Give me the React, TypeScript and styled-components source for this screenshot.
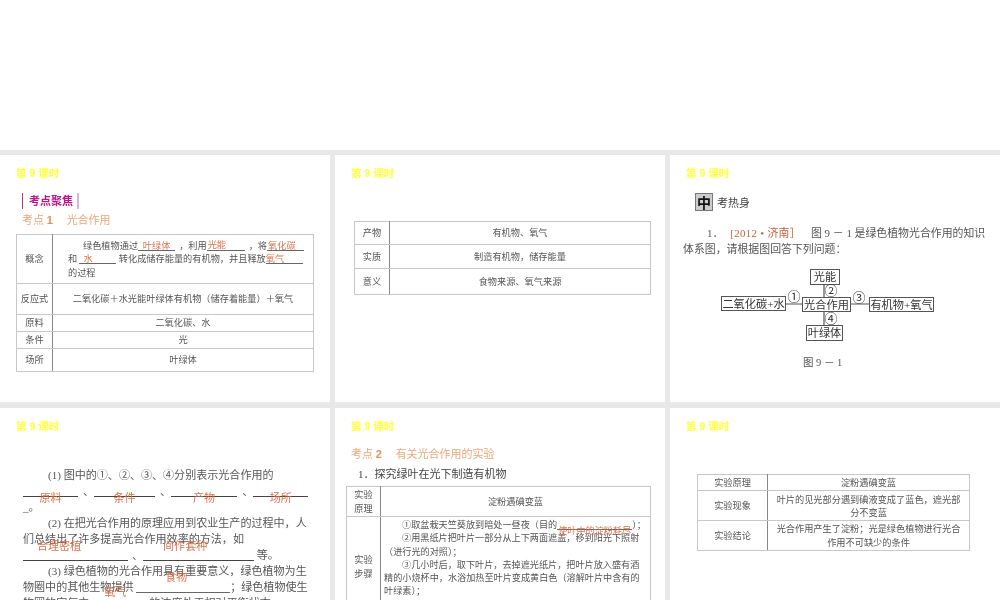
import React from 'react';
import styled, { createGlobalStyle } from 'styled-components';

const GlobalStyle = createGlobalStyle`
  html, body {
    margin: 0;
    height: 100%;
    overflow: hidden;
    background: #fff;
  }
  body {
    font-family: "Liberation Serif", "Noto Sans CJK SC", serif;
    color: #444;
  }
`;

const Page = styled.div`
  width: 1000px;
  height: 600px;
  overflow: hidden;
  padding-top: 150px;
  box-sizing: border-box;
`;

const Deck = styled.main`
  display: grid;
  grid-template-columns: repeat(3, 330px);
  grid-auto-rows: 247px;
  column-gap: 5px;
  row-gap: 6px;
  padding-top: 5px;
  height: 450px;
  box-sizing: border-box;
  background: #e8e8e8;
  overflow: hidden;
`;

const Slide = styled.section`
  background: #fff;
  overflow: hidden;
  padding: 11px 16px 0;
  box-sizing: border-box;
  filter: blur(0.35px);
`;

const SlideTitle = styled.h2`
  margin: 0;
  height: 14px;
  font-size: 10.5px;
  line-height: 14px;
  font-weight: 700;
  color: #ffff55;
  text-shadow: 0 0 1px #ffff88;
  font-family: "Liberation Sans", "Noto Sans CJK SC", sans-serif;
`;

const TagRow = styled.div`
  margin: 13px 0 0 6px;
  height: 16px;
  display: flex;
`;

const Tag = styled.span`
  display: block;
  padding: 0 4px 0 6px;
  font-size: 11px;
  line-height: 15px;
  font-weight: 700;
  font-family: "Noto Sans CJK SC", sans-serif;
  color: #c0148c;
  border-left: 1px solid #a04080;
  border-right: 2px solid #e8b0d0;
`;

const PointHeading = styled.h3<{ $top: number; $left?: number }>`
  margin: ${(p) => p.$top}px 0 0 ${(p) => p.$left ?? 6}px;
  font-size: 11px;
  line-height: 14px;
  font-weight: 400;
  color: #eba878;
  white-space: pre;

  b {
    font-family: "Liberation Sans", sans-serif;
    color: #e69058;
  }
`;

const DataTable = styled.table<{ $top: number; $left?: number; $width: number }>`
  margin: ${(p) => p.$top}px 0 0 ${(p) => p.$left ?? 0}px;
  width: ${(p) => p.$width}px;
  table-layout: fixed;
  border-collapse: collapse;
  font-size: 9.2px;
  line-height: 13.3px;
  color: #555;
`;

const Row = styled.tr<{ $h: number }>`
  height: ${(p) => p.$h}px;
`;

const HeadCell = styled.td<{ $w: number }>`
  width: ${(p) => p.$w}px;
  padding: 2px 0 0;
  text-align: center;
  border: 1px solid #c8c8c8;
  border-right-color: #888;
`;

const BodyCell = styled.td<{ $align?: string; $pad?: number }>`
  padding: 2px ${(p) => p.$pad ?? 0}px 0;
  text-align: ${(p) => p.$align ?? 'center'};
  border: 1px solid #c8c8c8;
  white-space: nowrap;
`;

const StepCell = styled.td`
  padding: 2px 0 0 3px;
  vertical-align: top;
  border: 1px solid #c8c8c8;
  white-space: nowrap;
  font-size: 9.15px;
`;

const Line = styled.div<{ $indent?: number }>`
  padding-left: ${(p) => p.$indent ?? 0}px;
  white-space: nowrap;
`;

const Blank = styled.span<{ $w: number; $color?: string }>`
  display: inline-block;
  position: relative;
  width: ${(p) => p.$w}px;
  height: 0;
  vertical-align: -2px;
  border-bottom: 1px solid ${(p) => p.$color ?? '#666'};
`;

const Answer = styled.span<{ $up: number; $x?: number }>`
  position: absolute;
  left: ${(p) => p.$x ?? 0}px;
  right: ${(p) => (p.$x === undefined ? 0 : 'auto')};
  bottom: ${(p) => p.$up}px;
  text-align: center;
  white-space: nowrap;
  line-height: 13px;
  color: #d8643c;
  opacity: 0.9;
`;

const Gap = styled.span<{ $w: number }>`
  display: inline-block;
  width: ${(p) => p.$w}px;
`;

const HotHeader = styled.div`
  margin: 13px 0 0 9px;
  display: flex;
  align-items: center;
  gap: 4px;
  height: 18px;
  font-size: 11px;
`;

const HotBadge = styled.span`
  width: 16px;
  height: 16px;
  display: flex;
  align-items: center;
  justify-content: center;
  background: #ccc;
  border: 1px solid #777;
  color: #111;
  font-size: 14px;
  font-weight: 700;
  font-family: "Noto Sans CJK SC", sans-serif;
`;

const Question = styled.div`
  margin: 14px 0 0 -3px;
  font-size: 10.9px;
  line-height: 16px;
  color: #555;
  width: 312px;

  em {
    font-style: normal;
    color: #c8603c;
    margin: 0 10px 0 7px;
    letter-spacing: 0.3px;
  }
`;

const Figure = styled.figure`
  margin: 12px 0 0 35px;
  width: 230px;

  svg {
    display: block;
  }

  figcaption {
    margin-top: 15px;
    margin-left: 82px;
    font-size: 10.5px;
    line-height: 14px;
    color: #555;
  }
`;

const Prose = styled.div<{ $top: number }>`
  margin: ${(p) => p.$top}px 0 0 7px;
  width: 288px;
  font-size: 11.05px;
  line-height: 16px;
  color: #555;
`;

const SubHeading = styled.div`
  margin: 6px 0 5px 7px;
  font-size: 11px;
  line-height: 14px;
  color: #444;
`;

const boxes = [
  { x: 89, y: 0, w: 29, h: 15, label: '光能' },
  { x: 0, y: 27, w: 64, h: 14, label: '二氧化碳+水' },
  { x: 81, y: 28, w: 48, h: 14, label: '光合作用' },
  { x: 148, y: 28, w: 64, h: 14, label: '有机物+氧气' },
  { x: 85, y: 56, w: 36, h: 15, label: '叶绿体' },
];

const marks = [
  { x: 73, y: 32, label: '①' },
  { x: 110, y: 26, label: '②' },
  { x: 138, y: 33, label: '③' },
  { x: 110, y: 54, label: '④' },
];

const PhotosynthesisDiagram: React.FC = () => (
  <svg width="214" height="72" viewBox="0 0 214 72" fontSize="11.2" fill="#333">
    <path d="M103 15V28M103 42V56M64 35H81M129 35H148" stroke="#555" strokeWidth="1.2" fill="none" />
    {boxes.map((b) => (
      <g key={b.label}>
        <rect x={b.x + 0.5} y={b.y + 0.5} width={b.w} height={b.h} fill="none" stroke="#555" />
        <text x={b.x + b.w / 2 + 0.5} y={b.y + 11.5} textAnchor="middle">
          {b.label}
        </text>
      </g>
    ))}
    {marks.map((m) => (
      <text key={m.label} x={m.x} y={m.y} textAnchor="middle" fontSize="13">
        {m.label}
      </text>
    ))}
  </svg>
);

const App: React.FC = () => {
  return (
    <Page>
      <GlobalStyle />
      <Deck>
        <Slide>
          <SlideTitle>第 9 课时</SlideTitle>
          <TagRow>
            <Tag>考点聚焦</Tag>
          </TagRow>
          <PointHeading $top={4}>
            考点 <b>1</b>{'　 '}光合作用
          </PointHeading>
          <DataTable $top={7} $width={298}>
            <tbody>
              <Row $h={49}>
                <HeadCell $w={35}>概念</HeadCell>
                <BodyCell $align="left" $pad={15}>
                  <Line $indent={15}>
                    绿色植物通过
                    <Blank $w={37}><Answer $up={-3}>叶绿体</Answer></Blank>
                    <Gap $w={4} />，利用
                    <Blank $w={38}><Answer $up={-2} $x={1}>光能</Answer></Blank>
                    <Gap $w={4} />，将
                    <Blank $w={37}><Answer $up={-3} $x={1}>氧化碳</Answer></Blank>
                  </Line>
                  <Line>
                    和 <Blank $w={37}><Answer $up={-3} $x={4}>水</Answer></Blank>{' '}
                    转化成储存能量的有机物，并且释放
                    <Blank $w={37}><Answer $up={-3} $x={0}>氧气</Answer></Blank>
                  </Line>
                  <Line>的过程</Line>
                </BodyCell>
              </Row>
              <Row $h={31}>
                <HeadCell $w={35}>反应式</HeadCell>
                <BodyCell>二氧化碳＋水光能叶绿体有机物（储存着能量）＋氧气</BodyCell>
              </Row>
              <Row $h={17}>
                <HeadCell $w={35}>原料</HeadCell>
                <BodyCell>二氧化碳、水</BodyCell>
              </Row>
              <Row $h={17}>
                <HeadCell $w={35}>条件</HeadCell>
                <BodyCell>光</BodyCell>
              </Row>
              <Row $h={23}>
                <HeadCell $w={35}>场所</HeadCell>
                <BodyCell>叶绿体</BodyCell>
              </Row>
            </tbody>
          </DataTable>
        </Slide>

        <Slide>
          <SlideTitle>第 9 课时</SlideTitle>
          <DataTable $top={41} $left={3} $width={297}>
            <tbody>
              <Row $h={23}>
                <HeadCell $w={34}>产物</HeadCell>
                <BodyCell>有机物、氧气</BodyCell>
              </Row>
              <Row $h={24}>
                <HeadCell $w={34}>实质</HeadCell>
                <BodyCell>制造有机物，储存能量</BodyCell>
              </Row>
              <Row $h={26}>
                <HeadCell $w={34}>意义</HeadCell>
                <BodyCell>食物来源、氧气来源</BodyCell>
              </Row>
            </tbody>
          </DataTable>
        </Slide>

        <Slide>
          <SlideTitle>第 9 课时</SlideTitle>
          <HotHeader>
            <HotBadge>中</HotBadge>
            考热身
          </HotHeader>
          <Question>
            <Line $indent={24}>
              1．<em>[2012 • 济南］</em>图 9 － 1 是绿色植物光合作用的知识
            </Line>
            <Line>体系图，请根据图回答下列问题：</Line>
          </Question>
          <Figure>
            <PhotosynthesisDiagram />
            <figcaption>图 9 － 1</figcaption>
          </Figure>
        </Slide>

        <Slide>
          <SlideTitle>第 9 课时</SlideTitle>
          <Prose $top={34}>
            <Line $indent={25}>(1) 图中的①、②、③、④分别表示光合作用的</Line>
            <Line>
              <Blank $w={55} $color="#444"><Answer $up={-9}>原料</Answer></Blank>
              <Gap $w={5} />、
              <Blank $w={61} $color="#444"><Answer $up={-9}>条件</Answer></Blank>
              <Gap $w={5} />、
              <Blank $w={66} $color="#444"><Answer $up={-9}>产物</Answer></Blank>
              <Gap $w={5} />、
              <Blank $w={55} $color="#444"><Answer $up={-9}>场所</Answer></Blank>
            </Line>
            <Line>_。</Line>
            <Line $indent={25}>(2) 在把光合作用的原理应用到农业生产的过程中，人</Line>
            <Line>们总结出了许多提高光合作用效率的方法，如</Line>
            <Line>
              <Blank $w={105} $color="#444"><Answer $up={7} $x={14}>合理密植</Answer></Blank>
              <Gap $w={4} />、
              <Blank $w={111} $color="#444"><Answer $up={7} $x={20}>间作套种</Answer></Blank>
              {' 等。'}
            </Line>
            <Line $indent={25}>(3) 绿色植物的光合作用具有重要意义，绿色植物为生</Line>
            <Line>
              物圈中的其他生物提供{' '}
              <Blank $w={94}><Answer $up={8} $x={29}>食物</Answer></Blank>
              ；绿色植物使生
            </Line>
            <Line>
              物圈的空气中
              <Blank $w={60}><Answer $up={9} $x={15}>氧气</Answer></Blank>
              的浓度处于相对平衡状态
            </Line>
          </Prose>
        </Slide>

        <Slide>
          <SlideTitle>第 9 课时</SlideTitle>
          <PointHeading $top={14} $left={0}>
            考点 <b>2</b>{'　 '}有关光合作用的实验
          </PointHeading>
          <SubHeading>1．探究绿叶在光下制造有机物</SubHeading>
          <DataTable $top={0} $left={-5} $width={305}>
            <tbody>
              <Row $h={30}>
                <HeadCell $w={33}>实验<br />原理</HeadCell>
                <BodyCell>淀粉遇碘变蓝</BodyCell>
              </Row>
              <Row $h={100}>
                <HeadCell $w={33}>实验<br />步骤</HeadCell>
                <StepCell>
                  <Line $indent={18}>
                    ①取盆栽天竺葵放到暗处一昼夜（目的
                    <Blank $w={75}><Answer $up={-9}>使叶中的淀粉耗尽</Answer></Blank>
                    ）；
                  </Line>
                  <Line $indent={18}>②用黑纸片把叶片一部分从上下两面遮盖，移到阳光下照射</Line>
                  <Line>（进行光的对照）；</Line>
                  <Line $indent={18}>③几小时后，取下叶片，去掉遮光纸片，把叶片放入盛有酒</Line>
                  <Line>精的小烧杯中，水浴加热至叶片变成黄白色（溶解叶片中含有的</Line>
                  <Line>叶绿素）；</Line>
                </StepCell>
              </Row>
            </tbody>
          </DataTable>
        </Slide>

        <Slide>
          <SlideTitle>第 9 课时</SlideTitle>
          <DataTable $top={41} $left={11} $width={273}>
            <tbody>
              <Row $h={16}>
                <HeadCell $w={69}>实验原理</HeadCell>
                <BodyCell>淀粉遇碘变蓝</BodyCell>
              </Row>
              <Row $h={30}>
                <HeadCell $w={69}>实验现象</HeadCell>
                <BodyCell>
                  叶片的见光部分遇到碘液变成了蓝色，遮光部<br />分不变蓝
                </BodyCell>
              </Row>
              <Row $h={29}>
                <HeadCell $w={69}>实验结论</HeadCell>
                <BodyCell>
                  光合作用产生了淀粉；光是绿色植物进行光合<br />作用不可缺少的条件
                </BodyCell>
              </Row>
            </tbody>
          </DataTable>
        </Slide>
      </Deck>
    </Page>
  );
};

export default App;
